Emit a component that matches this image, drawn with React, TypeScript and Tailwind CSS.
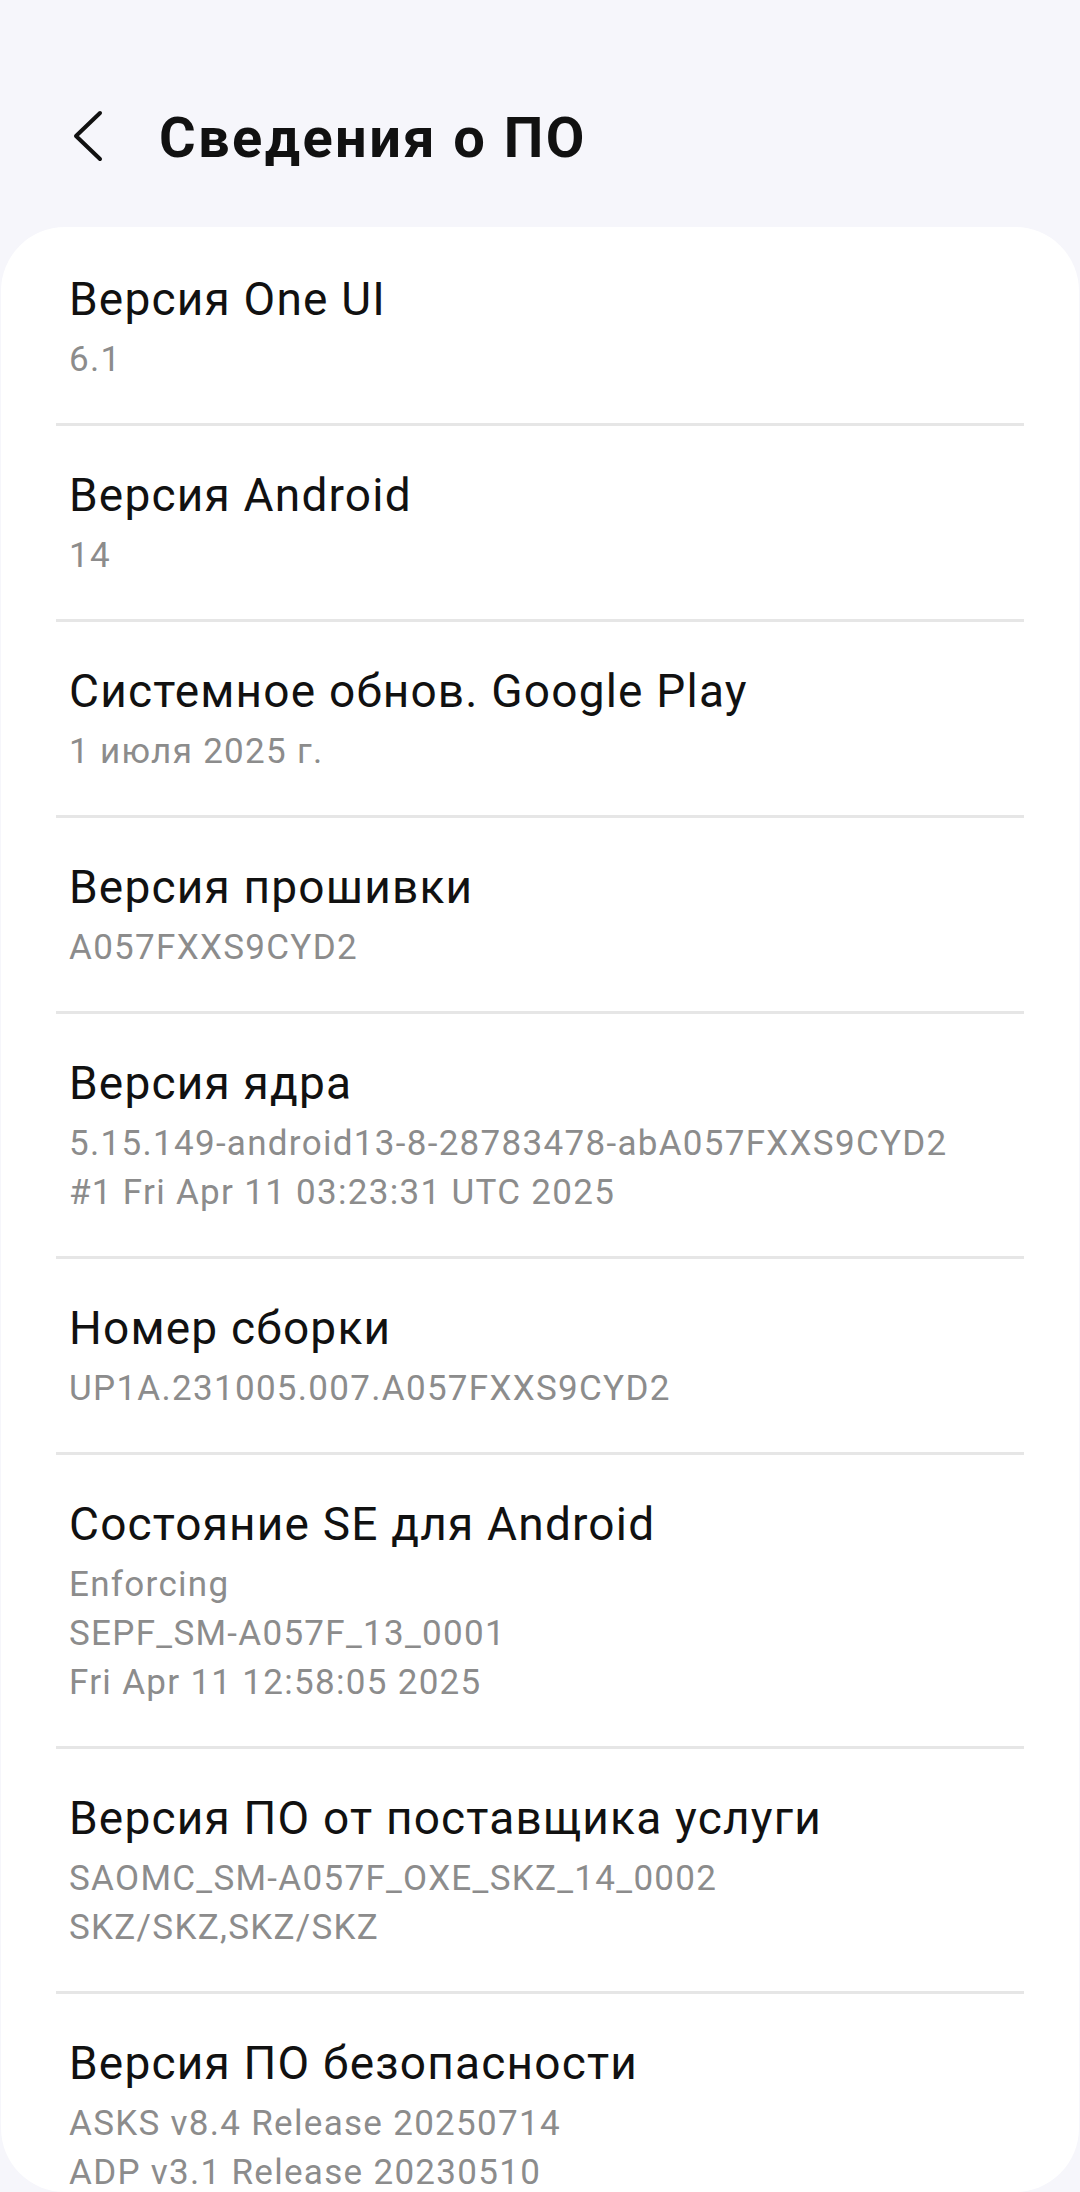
const items: { label: string; lines: string[] }[] = [
  { label: 'Версия One UI', lines: ['6.1'] },
  { label: 'Версия Android', lines: ['14'] },
  { label: 'Системное обнов. Google Play', lines: ['1 июля 2025 г.'] },
  { label: 'Версия прошивки', lines: ['A057FXXS9CYD2'] },
  {
    label: 'Версия ядра',
    lines: ['5.15.149-android13-8-28783478-abA057FXXS9CYD2', '#1 Fri Apr 11 03:23:31 UTC 2025'],
  },
  { label: 'Номер сборки', lines: ['UP1A.231005.007.A057FXXS9CYD2'] },
  {
    label: 'Состояние SE для Android',
    lines: ['Enforcing', 'SEPF_SM-A057F_13_0001', 'Fri Apr 11 12:58:05 2025'],
  },
  {
    label: 'Версия ПО от поставщика услуги',
    lines: ['SAOMC_SM-A057F_OXE_SKZ_14_0002', 'SKZ/SKZ,SKZ/SKZ'],
  },
  {
    label: 'Версия ПО безопасности',
    lines: ['ASKS v8.4 Release 20250714', 'ADP v3.1 Release 20230510'],
  },
];

function BackIcon() {
  return (
    <svg width="40" height="60" viewBox="0 0 40 60" fill="none">
      <path d="M30 7 L6 30 L30 53" stroke="#111" strokeWidth="4" strokeLinecap="round" strokeLinejoin="round" />
    </svg>
  );
}

export default function App() {
  return (
    <div
      className="w-[1080px] h-[2192px] overflow-hidden bg-[#f6f6fb] flex flex-col"
      style={{ fontFamily: 'Roboto, "Noto Sans", sans-serif' }}
    >
      {/* header */}
      <div className="h-[227px] flex items-start pt-[106px] pl-[70px]">
        <button className="w-[40px] h-[60px] flex items-center justify-center">
          <BackIcon />
        </button>
        <h1 className="ml-[49px] text-[56px] leading-[64px] font-bold text-[#111] tracking-[2.4px]">Сведения о ПО</h1>
      </div>

      {/* list card */}
      <div className="flex-1 bg-white rounded-[64px] mx-[1px] px-[55px] pt-[3px] overflow-hidden">
        {items.map((item, i) => (
          <div key={item.label} className={i < items.length - 1 ? 'border-b-[3px] border-[#e6e6e6]' : ''}>
            <div className="px-[13px] pt-[41px] pb-[39px]">
              <div className="text-[46px] leading-[56px] text-[#111] tracking-[1.2px]">{item.label}</div>
              <div className="mt-[8px]">
                {item.lines.map((line) => (
                  <div key={line} className="text-[35px] leading-[49px] text-[#8c8c8c] tracking-[1.3px]">
                    {line}
                  </div>
                ))}
              </div>
            </div>
          </div>
        ))}
      </div>
    </div>
  );
}
